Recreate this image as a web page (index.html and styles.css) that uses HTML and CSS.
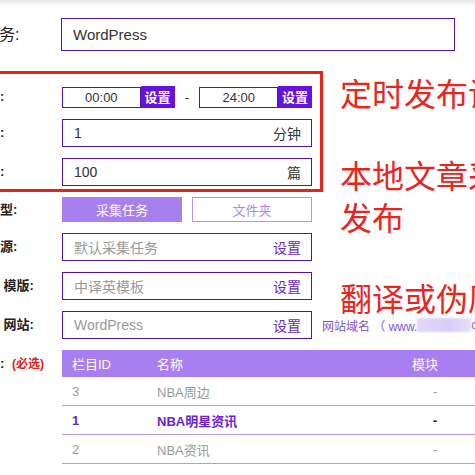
FILE: index.html
```html
<!DOCTYPE html>
<html lang="zh-CN">
<head>
<meta charset="utf-8">
<title>发布设置</title>
<link rel="stylesheet" href="styles.css">
</head>
<body>
<main class="form">
  <div class="row row-task">
    <span class="label label-lg">发布的任务:</span>
    <div class="field field-wide"><span class="val val-lg">WordPress</span></div>
  </div>

  <section class="timing">
    <div class="row row-time">
      <span class="label">发布时间段:</span>
      <div class="times">
        <div class="time">00:00</div><button class="btn-set">设置</button>
        <span class="dash">-</span>
        <div class="time">24:00</div><button class="btn-set">设置</button>
      </div>
    </div>
    <div class="row row-gap">
      <span class="label">发布间隔为:</span>
      <div class="field"><span class="val">1</span><span class="unit">分钟</span></div>
    </div>
    <div class="row row-gap">
      <span class="label">每天发布数:</span>
      <div class="field"><span class="val">100</span><span class="unit">篇</span></div>
    </div>
  </section>

  <div class="row row-type">
    <span class="label">采集来源类型:</span>
    <div class="toggle">
      <button class="tog tog-on">采集任务</button>
      <button class="tog tog-off">文件夹</button>
    </div>
  </div>

  <div class="row row-gap">
    <span class="label">本地文章来源:</span>
    <div class="field"><span class="ph">默认采集任务</span><span class="set">设置</span></div>
  </div>

  <div class="row row-gap">
    <span class="label">翻译伪原创 模版:</span>
    <div class="field"><span class="ph">中译英模板</span><span class="set">设置</span></div>
  </div>

  <div class="row row-gap row-site">
    <span class="label">已绑定发布 网站:</span>
    <div class="field"><span class="ph">WordPress</span><span class="set">设置</span></div>
    <span class="domain">网站域名 （ www.<span class="blur"></span>cn</span>
  </div>

  <div class="row row-gap row-table">
    <span class="label label-col">发布到栏目: <span class="req">(必选)</span></span>
    <table class="cols">
      <thead>
        <tr><th class="c-id">栏目ID</th><th class="c-name">名称</th><th class="c-mod">模块</th></tr>
      </thead>
      <tbody>
        <tr><td class="c-id">3</td><td class="c-name">NBA周边</td><td class="c-mod">-</td></tr>
        <tr class="sel"><td class="c-id">1</td><td class="c-name">NBA明星资讯</td><td class="c-mod">-</td></tr>
        <tr><td class="c-id">2</td><td class="c-name">NBA资讯</td><td class="c-mod">-</td></tr>
      </tbody>
    </table>
  </div>
</main>

<p class="note note-1">定时发布设置</p>
<p class="note note-2">本地文章采集发布</p>
<p class="note note-3">翻译或伪原创</p>
</body>
</html>
```

FILE: styles.css
```css
html, body {
  margin: 0;
  padding: 0;
}
body {
  width: 475px;
  height: 475px;
  overflow: hidden;
  position: relative;
  background: #fff linear-gradient(#e6e6e6, #ffffff 6px) no-repeat;
  background-size: 100% 6px;
  font-family: "Liberation Sans", "Noto Sans CJK SC", sans-serif;
  color: #333;
}
.form {
  margin-left: -65px;
  padding-top: 18px;
  display: flex;
  flex-direction: column;
}
.row {
  display: grid;
  grid-template-columns: 127px 250px;
  align-items: center;
}
.row-gap { margin-top: 11px; }
.row-task { grid-template-columns: 126px 394px; }
.label {
  font-size: 13px;
  font-weight: bold;
  color: #222;
  white-space: pre;
  line-height: 16px;
}
.label-lg {
  font-size: 16px;
  font-weight: normal;
}
.field {
  box-sizing: border-box;
  height: 28px;
  border: 1px solid #4c14b0;
  display: flex;
  align-items: center;
  justify-content: space-between;
  padding: 0 10px 0 11px;
  font-size: 14px;
  background: #fff;
}
.field-wide {
  height: 33px;
  padding-left: 11px;
}
.val { color: #333; }
.val-lg { font-size: 15px; }
.unit { color: #333; }
.ph { color: #9a9a9a; }
.set { color: #6a2ac8; }

.timing {
  margin-top: 20px;
  margin-left: -10px;
  width: fit-content;
  border: 3px solid #e3231c;
  padding: 12px 8px 3px 7px;
}
.times {
  display: flex;
  align-items: center;
  height: 22px;
}
.time {
  box-sizing: border-box;
  width: 79px;
  height: 21px;
  border: 1px solid #4c14b0;
  font-size: 13px;
  line-height: 19px;
  text-align: center;
  color: #333;
}
.btn-set {
  box-sizing: border-box;
  width: 34px;
  height: 22px;
  border: 0;
  padding: 0;
  background: #6511e0;
  color: #fff;
  font-family: "Noto Sans CJK SC", sans-serif;
  font-size: 13px;
  font-weight: bold;
  line-height: 22px;
}
.dash {
  width: 25px;
  text-align: center;
  font-size: 13px;
  color: #333;
}

.row-type { margin-top: 5px; }
.toggle {
  display: flex;
  gap: 10px;
}
.tog {
  box-sizing: border-box;
  width: 120px;
  height: 25px;
  padding: 0;
  font-family: "Noto Sans CJK SC", sans-serif;
  font-size: 13px;
}
.tog-on {
  background: #a97ff0;
  border: 1px solid #a97ff0;
  color: #fff;
}
.tog-off {
  background: #fff;
  border: 1px solid #b794ec;
  color: #b08ae6;
}

.row-site { grid-template-columns: 127px 250px auto; }
.domain {
  margin-left: 10px;
  font-size: 12px;
  color: #7d56d4;
  white-space: pre;
  display: flex;
  align-items: center;
}
.blur {
  display: inline-block;
  width: 54px;
  height: 14px;
  background: linear-gradient(90deg, #e2d8f7, #d8ccf5 60%, #e8e0fa);
  filter: blur(1px);
}

.row-table { align-items: start; grid-template-columns: 127px 430px; }
.label-col { line-height: 27px; }
.req {
  color: #e0201a;
  font-size: 12px;
  margin-left: 4px;
}
.cols {
  width: 430px;
  border-collapse: collapse;
  font-size: 13px;
}
.cols th {
  background: #a97ef0;
  color: #fff;
  font-weight: normal;
  height: 27px;
  padding: 0 0 0 10px;
  text-align: left;
}
.cols td {
  height: 28px;
  padding: 0 0 0 10px;
  color: #9a9a9a;
  border-bottom: 1px solid #b59be2;
  text-align: left;
}
.cols .c-id { width: 75px; }
.cols .c-name { width: 245px; }
.cols td.c-mod { padding-left: 31px; }
.cols .sel td {
  color: #6a1fd0;
  font-weight: bold;
}
.cols .sel td.c-mod { color: #222; }

.note {
  position: absolute;
  margin: 0;
  left: 340px;
  font-family: "Noto Sans CJK SC", sans-serif;
  font-size: 32px;
  line-height: 32px;
  color: #e8261e;
  white-space: nowrap;
}
.note-1 { top: 76px; }
.note-2 {
  top: 153px;
  width: 195px;
  white-space: normal;
  line-height: 42px;
}
.note-3 { top: 281px; }
```
